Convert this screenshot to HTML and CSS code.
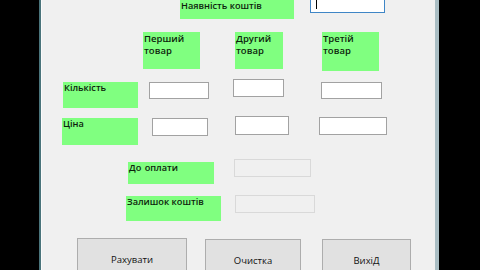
FILE: index.html
```html
<!DOCTYPE html>
<html lang="uk">
<head>
<meta charset="utf-8">
<title>Покупка товарів</title>
<link rel="stylesheet" href="styles.css">
</head>
<body>
<div class="desk desk-left"></div>
<div class="window">
  <div class="form">
    <div class="row row-1">
      <div class="label lbl-funds">Наявність коштів</div>
      <div class="field-wrap in-funds">
        <input class="field focused" type="text">
        <span class="caret"></span>
      </div>
    </div>
    <div class="row row-2">
      <div class="label big lbl-p1">Перший товар</div>
      <div class="label big lbl-p2">Другий товар</div>
      <div class="label big lbl-p3">Третій товар</div>
    </div>
    <div class="row row-3">
      <div class="label lbl-qty">Кількість</div>
      <input class="field q1" type="text">
      <input class="field q2" type="text">
      <input class="field q3" type="text">
    </div>
    <div class="row row-4">
      <div class="label lbl-price">Ціна</div>
      <input class="field p1" type="text">
      <input class="field p2" type="text">
      <input class="field p3" type="text">
    </div>
    <div class="row row-5">
      <div class="label lbl-pay">До оплати</div>
      <input class="field readonly ro-pay" type="text" readonly>
    </div>
    <div class="row row-6">
      <div class="label lbl-rest">Залишок коштів</div>
      <input class="field readonly ro-rest" type="text" readonly>
    </div>
    <div class="row row-7">
      <button class="btn b-calc" type="button">Рахувати</button>
      <button class="btn b-clear" type="button">Очистка</button>
      <button class="btn b-exit" type="button">ВихіД</button>
    </div>
  </div>
</div>
<div class="desk desk-right"></div>
</body>
</html>
```
FILE: styles.css
```css
html, body {
  margin: 0;
  padding: 0;
  height: 270px;
  overflow: hidden;
  background: #000;
}
body {
  display: flex;
  width: 480px;
  font-family: "Open Sans", "Noto Sans", sans-serif;
  color: #0d1f0d;
}
.desk-left { width: 39px; flex: none; background: #000; }
.desk-right { flex: 1; background: #000; }
.window {
  width: 400px;
  height: 270px;
  flex: none;
  box-sizing: border-box;
  border-left: 2px solid #4a747b;
  border-right: 4px solid #a9bdc3;
  background: #f0f0f0;
}
.form {
  height: 270px;
  box-sizing: border-box;
  border-left: 1px solid #fbfbfb;
  background: #f0f0f0;
  display: flex;
  flex-direction: column;
  overflow: hidden;
}
.row {
  display: flex;
  align-items: flex-start;
  flex: none;
}
.row-1 { margin-top: -6px; height: 25px; }
.row-2 { margin-top: 13px; height: 39px; }
.row-3 { margin-top: 8px; height: 29px; }
.row-4 { margin-top: 8px; height: 29px; }
.row-5 { margin-top: 14px; height: 25px; }
.row-6 { margin-top: 11px; height: 26px; }
.row-7 { margin-top: 17px; height: 44px; }

.label {
  flex: none;
  box-sizing: border-box;
  background: #80ff80;
  font-size: 9.2px;
  line-height: 11px;
  font-weight: 600;
  padding-left: 1px;
  white-space: nowrap;
}
.label.big {
  font-size: 9.5px;
  line-height: 11.5px;
  padding-top: 1px;
  white-space: normal;
}
.lbl-funds { margin-left: 138px; width: 114px; height: 25px; padding-top: 6px; }
.lbl-p1 { margin-left: 101px; width: 57px; height: 37px; }
.lbl-p2 { margin-left: 35px; width: 48px; height: 37px; }
.lbl-p3 { margin-left: 39px; width: 57px; height: 39px; }
.lbl-qty { margin-left: 21px; margin-top: 3px; width: 75px; height: 26px; }
.lbl-price { margin-left: 20px; margin-top: 2px; width: 76px; height: 27px; }
.lbl-pay { margin-left: 86px; margin-top: 3px; width: 86px; height: 22px; word-spacing: 1px; }
.lbl-rest { margin-left: 84px; margin-top: 1px; width: 95px; height: 25px; }

.field {
  flex: none;
  display: block;
  box-sizing: border-box;
  margin: 0;
  padding: 0;
  border: 1px solid #a2a2a2;
  background: #fff;
  outline: none;
}
.field.focused { border-color: #3f86c6; width: 75px; height: 19px; }
.field.readonly { background: #f0f0f0; border-color: #d9d9d9; }
.field-wrap {
  position: relative;
  flex: none;
  margin-left: 16px;
}
.caret {
  position: absolute;
  left: 6px;
  top: 5px;
  width: 1px;
  height: 10px;
  background: #000;
}
.q1 { margin-left: 11px; margin-top: 3px; width: 60px; height: 17px; }
.q2 { margin-left: 24px; width: 51px; height: 18px; }
.q3 { margin-left: 37px; margin-top: 3px; width: 61px; height: 17px; }
.p1 { margin-left: 14px; margin-top: 2px; width: 56px; height: 18px; }
.p2 { margin-left: 27px; width: 54px; height: 19px; }
.p3 { margin-left: 30px; margin-top: 1px; width: 68px; height: 18px; }
.ro-pay { margin-left: 20px; width: 77px; height: 18px; }
.ro-rest { margin-left: 14px; width: 80px; height: 18px; }

.btn {
  flex: none;
  box-sizing: border-box;
  margin: 0;
  padding: 0;
  height: 42px;
  border: 1px solid #adadad;
  background: #e1e1e1;
  font-family: "Open Sans", "Noto Sans", sans-serif;
  font-size: 9.5px;
  color: #111;
}
.b-calc { margin-left: 35px; width: 110px; }
.b-clear { margin-left: 18px; margin-top: 1px; width: 96px; }
.b-exit { margin-left: 21px; margin-top: 1px; width: 89px; }
```
